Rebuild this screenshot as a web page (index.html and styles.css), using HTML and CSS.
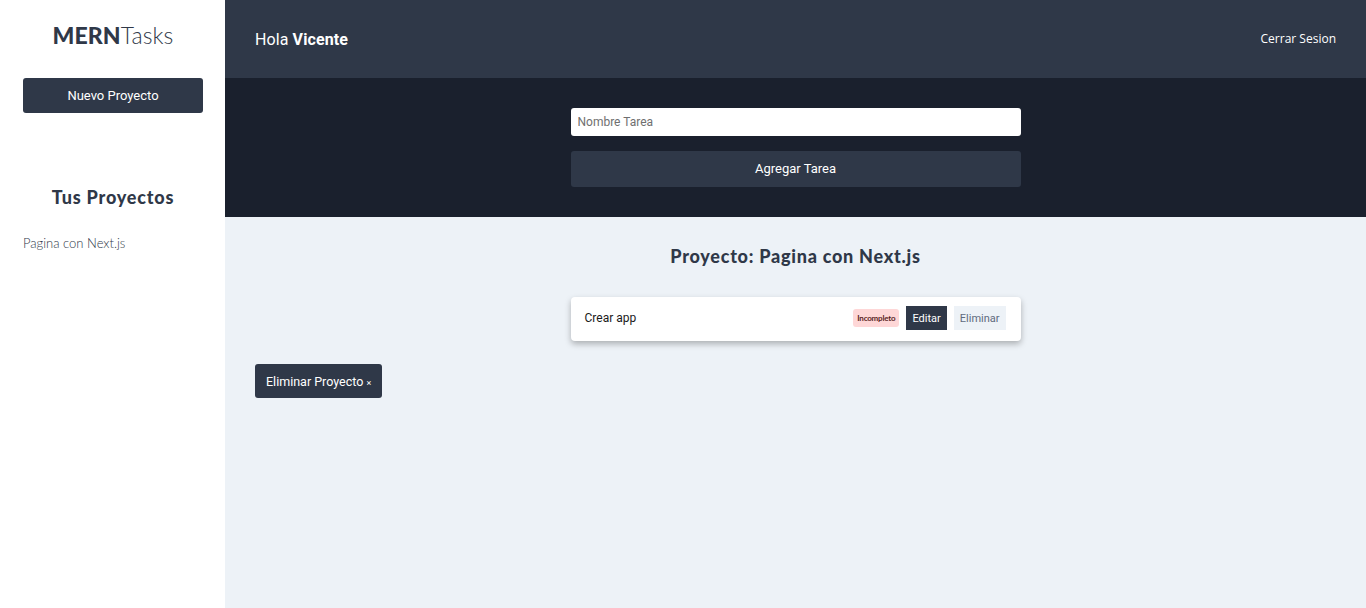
FILE: index.html
```html
<!DOCTYPE html>
<html lang="es">
<head>
<meta charset="utf-8">
<title>MERN Tasks</title>
<link rel="stylesheet" href="styles.css">
</head>
<body>
<div class="app">
  <aside class="sidebar">
    <h1 class="logo"><span class="logo-bold">MERN</span>Tasks</h1>
    <button class="btn btn-new">Nuevo Proyecto</button>
    <h2 class="side-title">Tus Proyectos</h2>
    <ul class="project-list">
      <li>Pagina con Next.js</li>
    </ul>
  </aside>
  <div class="main">
    <header class="topbar">
      <p class="greeting">Hola <strong>Vicente</strong></p>
      <a class="logout">Cerrar Sesion</a>
    </header>
    <section class="form-area">
      <form class="task-form">
        <input class="input" type="text" placeholder="Nombre Tarea">
        <button type="button" class="btn btn-add">Agregar Tarea</button>
      </form>
    </section>
    <section class="content">
      <h2 class="project-title">Proyecto: Pagina con Next.js</h2>
      <ul class="task-list">
        <li class="task">
          <span class="task-name">Crear app</span>
          <div class="task-actions">
            <span class="badge">Incompleto</span>
            <button class="btn-sm btn-edit">Editar</button>
            <button class="btn-sm btn-del">Eliminar</button>
          </div>
        </li>
      </ul>
      <div class="content-actions">
        <button class="btn btn-delproj">Eliminar Proyecto <span class="x">&times;</span></button>
      </div>
    </section>
  </div>
</div>
</body>
</html>
```

FILE: styles.css
```css
* { box-sizing: border-box; }
html, body { margin: 0; padding: 0; height: 100%; }
body { font-family: Roboto, "Liberation Sans", sans-serif; color: #1a202d; }
.app { display: flex; height: 608px; }

.sidebar { width: 225px; flex-shrink: 0; background: #fff; padding: 0 22px 0 23px; display: flex; flex-direction: column; }
.logo { margin: 21px 0 0; text-align: center; font-family: Lato, "Noto Sans", sans-serif; font-weight: 300; font-size: 23px; line-height: 28px; color: #2f3848; letter-spacing: 0.1px; }
.logo-bold { font-weight: 900; }
.btn { border: none; font-family: Roboto, "Liberation Sans", sans-serif; color: #fff; background: #2f3848; cursor: pointer; }
.btn-new { margin-top: 29px; width: 180px; height: 35px; border-radius: 3px; font-size: 13px; padding-bottom: 2px; }
.side-title { margin: 73px 0 0; text-align: center; font-family: Lato, "Noto Sans", sans-serif; font-weight: 900; font-size: 18px; line-height: 22px; color: #2f3848; letter-spacing: 0.8px; }
.project-list { list-style: none; margin: 27px 0 0; padding: 0; font-family: Lato, "Noto Sans", sans-serif; font-weight: 300; font-size: 13px; color: #2f3848; }

.main { flex: 1; display: flex; flex-direction: column; background: #edf2f7; }
.topbar { height: 78px; background: #2f3848; display: flex; align-items: center; justify-content: space-between; padding: 0 30px; }
.greeting { margin: 0; color: #fff; font-size: 16px; letter-spacing: 0.1px; }
.greeting strong { font-weight: 700; }
.logout { color: #fff; font-family: "Open Sans", sans-serif; font-size: 12px; margin-top: -2px; }

.form-area { background: #1a202d; height: 139px; display: flex; justify-content: center; padding-top: 30px; }
.task-form { width: 450px; display: flex; flex-direction: column; gap: 15px; }
.input { height: 28px; border: none; border-radius: 3px; padding: 0 7px; font-family: Roboto, sans-serif; font-size: 12px; color: #333; background: #fff; }
.input::placeholder { color: #6f6f6f; }
.btn-add { height: 36px; border-radius: 3px; font-size: 13px; padding-bottom: 2px; }

.content { display: flex; flex-direction: column; align-items: center; padding: 29px 30px 0; }
.project-title { margin: 0; font-family: Lato, "Noto Sans", sans-serif; font-weight: 900; font-size: 18px; line-height: 20px; color: #2f3848; letter-spacing: 0.75px; }
.task-list { list-style: none; margin: 31px 0 0; padding: 0; width: 450px; }
.task { height: 44px; background: #fff; border-radius: 4px; box-shadow: 0 3px 6px rgba(0,0,0,0.28); display: flex; align-items: center; justify-content: space-between; padding: 0 15px 2px 14px; }
.task-name { font-size: 12px; color: #1a1a1a; }
.task-actions { display: flex; align-items: center; gap: 7px; }
.badge { background: #fed7d7; color: #5a1f1f; font-family: Lato, sans-serif; font-weight: 700; font-size: 8px; padding: 4px 4px; border-radius: 3px; letter-spacing: -0.2px; }
.btn-sm { border: none; font-family: Roboto, sans-serif; font-size: 11px; height: 24px; padding: 0 6px; }
.btn-edit { background: #2f3848; color: #fff; }
.btn-del { background: #edf2f7; color: #5f6b7e; }
.content-actions { align-self: flex-start; margin-top: 23px; }
.btn-delproj { height: 34px; padding: 0 11px; border-radius: 3px; font-size: 12.5px; }
.x { font-size: 9px; }
```
